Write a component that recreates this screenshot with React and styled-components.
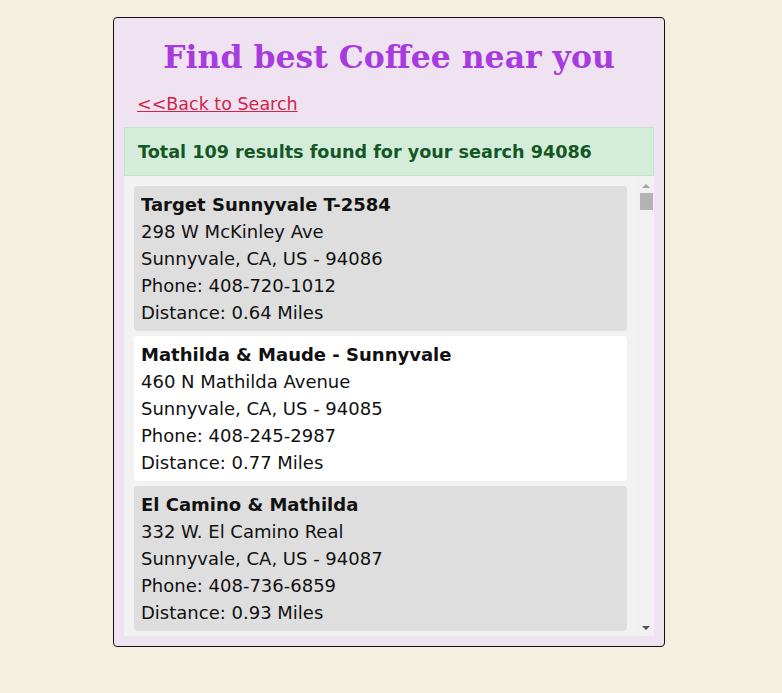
import React from "react";
import styled, { createGlobalStyle } from "styled-components";

const Global = createGlobalStyle`
  html, body { margin: 0; padding: 0; }
  body {
    background: #f5efdf;
    font-family: "DejaVu Sans", Verdana, sans-serif;
  }
`;

const Page = styled.div`
  display: flex;
  justify-content: center;
  padding: 17px 4px 0 0;
`;

const Card = styled.div`
  box-sizing: border-box;
  width: 552px;
  height: 630px;
  border: 1px solid #111;
  border-radius: 4px;
  background: #f0e3f1;
  padding: 0 10px 10px;
  display: flex;
  flex-direction: column;
`;

const Title = styled.h1`
  margin: 19px 0 0;
  text-align: center;
  font-family: "DejaVu Serif", Georgia, serif;
  font-weight: bold;
  font-size: 31.5px;
  line-height: 40px;
  color: #a83be0;
`;

const BackLink = styled.a`
  display: inline-block;
  align-self: flex-start;
  margin: 16px 0 0 13px;
  font-size: 17.5px;
  line-height: 22px;
  color: #d3234a;
  text-decoration: underline;
  cursor: pointer;
`;

const Banner = styled.div`
  margin-top: 12px;
  background: #d4edda;
  border: 1px solid #c3e6cb;
  color: #155724;
  font-weight: bold;
  font-size: 17.6px;
  line-height: 20px;
  padding: 14px 13px 13px;
`;

const ListArea = styled.div`
  flex: 1;
  min-height: 0;
  background: #f2f2f2;
  display: flex;
`;

const List = styled.div`
  flex: 1;
  min-width: 0;
  overflow: hidden;
  padding: 10px 11px 0 10px;
  display: flex;
  flex-direction: column;
  gap: 5px;
`;

const ScrollBar = styled.div`
  width: 16px;
  flex-shrink: 0;
  background: #f1f1f1;
  display: flex;
  flex-direction: column;
  align-items: center;
  padding: 8px 0 6px;
  box-sizing: border-box;
`;

const Arrow = styled.div`
  width: 0;
  height: 0;
  border-left: 4px solid transparent;
  border-right: 4px solid transparent;
  ${(p) =>
    p.$down
      ? `border-top: 4px solid #505050; margin-top: auto;`
      : `border-bottom: 4px solid #a3a3a3;`}
`;

const Thumb = styled.div`
  width: 13px;
  height: 17px;
  margin-top: 5px;
  background: #b3b3b3;
`;

const Item = styled.div`
  flex-shrink: 0;
  background: ${(p) => (p.$alt ? "#ffffff" : "#dedede")};
  border-radius: 4px;
  padding: 5px 7px 5px;
  font-size: 18px;
  line-height: 27px;
  color: #111;
`;

const Name = styled.div`
  font-weight: bold;
`;

const Line = styled.div``;

const results = [
  {
    name: "Target Sunnyvale T-2584",
    street: "298 W McKinley Ave",
    city: "Sunnyvale, CA, US - 94086",
    phone: "408-720-1012",
    distance: "0.64",
  },
  {
    name: "Mathilda & Maude - Sunnyvale",
    street: "460 N Mathilda Avenue",
    city: "Sunnyvale, CA, US - 94085",
    phone: "408-245-2987",
    distance: "0.77",
  },
  {
    name: "El Camino & Mathilda",
    street: "332 W. El Camino Real",
    city: "Sunnyvale, CA, US - 94087",
    phone: "408-736-6859",
    distance: "0.93",
  },
];

export default function App() {
  return (
    <>
      <Global />
      <Page>
        <Card>
          <Title>Find best Coffee near you</Title>
          <BackLink href="#">&lt;&lt;Back to Search</BackLink>
          <Banner>Total 109 results found for your search 94086</Banner>
          <ListArea>
            <List>
              {results.map((r, i) => (
                <Item key={i} $alt={i % 2 === 1}>
                  <Name>{r.name}</Name>
                  <Line>{r.street}</Line>
                  <Line>{r.city}</Line>
                  <Line>Phone: {r.phone}</Line>
                  <Line>Distance: {r.distance} Miles</Line>
                </Item>
              ))}
            </List>
            <ScrollBar>
              <Arrow />
              <Thumb />
              <Arrow $down />
            </ScrollBar>
          </ListArea>
        </Card>
      </Page>
    </>
  );
}
